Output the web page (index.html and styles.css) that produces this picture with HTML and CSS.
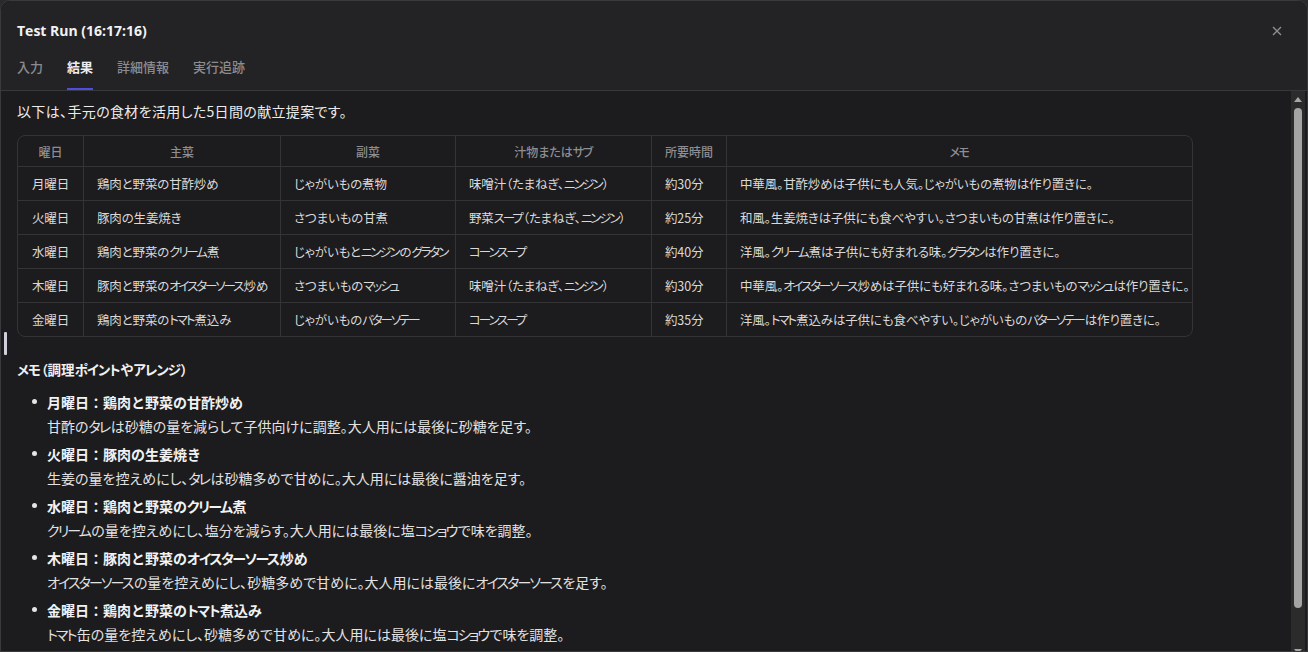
FILE: index.html
```html
<!DOCTYPE html>
<html lang="ja">
<head>
<meta charset="utf-8">
<title>Test Run</title>
<link rel="stylesheet" href="styles.css">
</head>
<body>
<div class="dialog">
  <header class="head">
    <div class="title-row">
      <h1 class="title">Test Run (16:17:16)</h1>
      <button class="close" aria-label="close">
        <svg width="10" height="10" viewBox="0 0 10 10"><path d="M1 1 L9 9 M9 1 L1 9" stroke="#8d8d92" stroke-width="1.4" fill="none"/></svg>
      </button>
    </div>
    <nav class="tabs">
      <span class="tab">入力</span>
      <span class="tab active">結果</span>
      <span class="tab">詳細情報</span>
      <span class="tab">実行追跡</span>
    </nav>
  </header>
  <div class="body">
    <div class="content">
      <p class="intro">以下は、手元の食材を活用した5日間の献立提案です。</p>
      <table class="menu">
        <colgroup>
          <col class="c1"><col class="c2"><col class="c3"><col class="c4"><col class="c5"><col class="c6">
        </colgroup>
        <thead>
          <tr><th>曜日</th><th>主菜</th><th>副菜</th><th>汁物または<span class="kt">サブ</span></th><th>所要時間</th><th><span class="kt">メモ</span></th></tr>
        </thead>
        <tbody>
          <tr><td class="day">月曜日</td><td>鶏肉と野菜の甘酢炒め</td><td>じゃがいもの煮物</td><td>味噌汁（たまねぎ、<span class="kt">ニンジン</span>）</td><td>約30分</td><td>中華風。甘酢炒めは子供にも人気。じゃがいもの煮物は作り置きに。</td></tr>
          <tr><td class="day">火曜日</td><td>豚肉の生姜焼き</td><td>さつまいもの甘煮</td><td>野菜<span class="kt">スープ</span>（たまねぎ、<span class="kt">ニンジン</span>）</td><td>約25分</td><td>和風。生姜焼きは子供にも食べやすい。さつまいもの甘煮は作り置きに。</td></tr>
          <tr><td class="day">水曜日</td><td>鶏肉と野菜の<span class="kt">クリーム</span>煮</td><td>じゃがいもと<span class="kt">ニンジン</span>の<span class="kt">グラタン</span></td><td><span class="kt">コーンスープ</span></td><td>約40分</td><td>洋風。<span class="kt">クリーム</span>煮は子供にも好まれる味。<span class="kt">グラタン</span>は作り置きに。</td></tr>
          <tr><td class="day">木曜日</td><td>豚肉と野菜の<span class="kt">オイスターソース</span>炒め</td><td>さつまいもの<span class="kt">マッシュ</span></td><td>味噌汁（たまねぎ、<span class="kt">ニンジン</span>）</td><td>約30分</td><td>中華風。<span class="kt">オイスターソース</span>炒めは子供にも好まれる味。さつまいもの<span class="kt">マッシュ</span>は作り置きに。</td></tr>
          <tr><td class="day">金曜日</td><td>鶏肉と野菜の<span class="kt">トマト</span>煮込み</td><td>じゃがいもの<span class="kt">バターソテー</span></td><td><span class="kt">コーンスープ</span></td><td>約35分</td><td>洋風。<span class="kt">トマト</span>煮込みは子供にも食べやすい。じゃがいもの<span class="kt">バターソテー</span>は作り置きに。</td></tr>
        </tbody>
      </table>
      <h2 class="memo-title"><span class="kt">メモ</span>（調理<span class="kt">ポイント</span>や<span class="kt">アレンジ</span>）</h2>
      <ul class="notes">
        <li><strong>月曜日：鶏肉と野菜の甘酢炒め</strong><span class="desc">甘酢の<span class="kt">タレ</span>は砂糖の量を減らして子供向けに調整。大人用には最後に砂糖を足す。</span></li>
        <li><strong>火曜日：豚肉の生姜焼き</strong><span class="desc">生姜の量を控えめにし、<span class="kt">タレ</span>は砂糖多めで甘めに。大人用には最後に醤油を足す。</span></li>
        <li><strong>水曜日：鶏肉と野菜の<span class="kt">クリーム</span>煮</strong><span class="desc"><span class="kt">クリーム</span>の量を控えめにし、塩分を減らす。大人用には最後に塩<span class="kt">コショウ</span>で味を調整。</span></li>
        <li><strong>木曜日：豚肉と野菜の<span class="kt">オイスターソース</span>炒め</strong><span class="desc"><span class="kt">オイスターソース</span>の量を控えめにし、砂糖多めで甘めに。大人用には最後に<span class="kt">オイスターソース</span>を足す。</span></li>
        <li><strong>金曜日：鶏肉と野菜の<span class="kt">トマト</span>煮込み</strong><span class="desc"><span class="kt">トマト</span>缶の量を控えめにし、砂糖多めで甘めに。大人用には最後に塩<span class="kt">コショウ</span>で味を調整。</span></li>
      </ul>
    </div>
    <div class="scrollbar">
      <div class="arrow up"></div>
      <div class="thumb"></div>
      <div class="arrow down"></div>
    </div>
  </div>
  <div class="caret"></div>
</div>
</body>
</html>
```
FILE: styles.css
```css
* { box-sizing: border-box; }
html, body { margin: 0; padding: 0; height: 100%; background: #2a2a2c; }
body {
  font-family: "Noto Sans CJK JP", "Noto Sans", sans-serif;
  color: #e6e6e6;
  overflow: hidden;
}
.dialog {
  position: relative;
  height: 100vh;
  border: 1px solid #3a3a3d;
  border-radius: 10px 10px 0 0;
  background: #1c1b1e;
  display: flex;
  flex-direction: column;
  overflow: hidden;
}
.head {
  background: #232326;
  border-bottom: 1px solid #38383b;
  padding: 18px 25px 0 16px;
}
.title-row {
  display: flex;
  justify-content: space-between;
  align-items: center;
  height: 24px;
}
.title {
  margin: 0;
  font-family: "Open Sans", "Noto Sans", sans-serif;
  font-size: 14px;
  font-weight: 700;
  color: #f2f2f2;
  line-height: 24px;
}
.close {
  background: none;
  border: 0;
  padding: 0;
  width: 10px;
  height: 10px;
  display: flex;
}
.tabs {
  display: flex;
  gap: 24px;
  margin-top: 12px;
}
.tab {
  font-size: 13px;
  line-height: 24px;
  padding-bottom: 9px;
  border-bottom: 2px solid transparent;
  color: #8b8b90;
  font-weight: 500;
}
.tab.active {
  color: #ededf0;
  font-weight: 700;
  border-bottom-color: #4f4de0;
}
.body {
  flex: 1;
  display: flex;
  min-height: 0;
  padding-right: 2px;
}
.content {
  flex: 1;
  overflow: hidden;
  padding: 8px 0 0 16px;
  font-feature-settings: "palt";
}
.kt { font-feature-settings: "palt"; }
.intro {
  margin: 0 0 12px;
  font-size: 14px;
  letter-spacing: 0.35px;
  line-height: 24px;
  color: #ececec;
}
.menu {
  width: 1176px;
  table-layout: fixed;
  border-collapse: separate;
  border-spacing: 0;
  border: 1px solid #343437;
  border-radius: 8px;
  font-size: 12.5px;
}
.menu .kt { letter-spacing: -2.1px; margin-right: 1.2px; }
.c1 { width: 66px; }
.c2 { width: 197px; }
.c3 { width: 175px; }
.c4 { width: 196px; }
.c5 { width: 75px; }
.c6 { width: auto; }
.menu th, .menu td {
  border-right: 1px solid #343437;
  border-bottom: 1px solid #343437;
  white-space: nowrap;
  overflow: hidden;
}
.menu th:last-child, .menu td:last-child { border-right: 0; }
.menu tbody tr:last-child td { border-bottom: 0; height: 33px; }
.menu th {
  height: 31px;
  font-weight: 500;
  font-size: 12px;
  color: #8e8e92;
  text-align: center;
  padding: 0 8px;
}
.menu th .kt { letter-spacing: -1.5px; margin-right: 1px; }
.menu td {
  height: 34px;
  padding: 0 13px;
  color: #d9d9d9;
  letter-spacing: -0.15px;
}
.menu td.day { text-align: center; padding: 0; }
.memo-title {
  margin: 20px 0 9px;
  font-size: 13.5px;
  line-height: 24px;
  font-weight: 700;
  color: #f0f0f0;
}
.memo-title .kt { letter-spacing: -1px; margin-right: 1px; }
.notes {
  margin: 0;
  padding: 0 0 0 30px;
  list-style: none;
  font-size: 14px;
  line-height: 24px;
}
.notes li {
  position: relative;
  margin-bottom: 4px;
  color: #e2e2e2;
}
.notes li::before {
  content: "";
  position: absolute;
  left: -15px;
  top: 9px;
  width: 5px;
  height: 5px;
  border-radius: 50%;
  background: #e4e4e4;
}
.notes strong {
  display: block;
  font-weight: 700;
  color: #f2f2f2;
  font-size: 14px;
  font-feature-settings: normal;
}
.notes strong .kt { font-feature-settings: "palt"; letter-spacing: -1.5px; margin-right: 1px; }
.notes .desc { display: block; }
.notes .desc .kt { letter-spacing: -1.9px; margin-right: 1.4px; }
.scrollbar {
  width: 14px;
  background: #2b2b2c;
  position: relative;
  display: flex;
  flex-direction: column;
  align-items: center;
}
.arrow {
  width: 0;
  height: 0;
  border-left: 4px solid transparent;
  border-right: 4px solid transparent;
}
.arrow.up {
  margin-top: 6px;
  border-bottom: 5px solid #a6a6a6;
}
.thumb {
  width: 8px;
  height: 500px;
  margin-top: 6px;
  background: #a4a4a4;
  border-radius: 4px;
}
.arrow.down {
  margin-top: auto;
  margin-bottom: -3px;
  border-top: 5px solid #a6a6a6;
}
.caret {
  position: absolute;
  left: 3px;
  top: 331px;
  width: 3px;
  height: 23px;
  background: #cfd0dc;
  border-radius: 1px;
}
```
